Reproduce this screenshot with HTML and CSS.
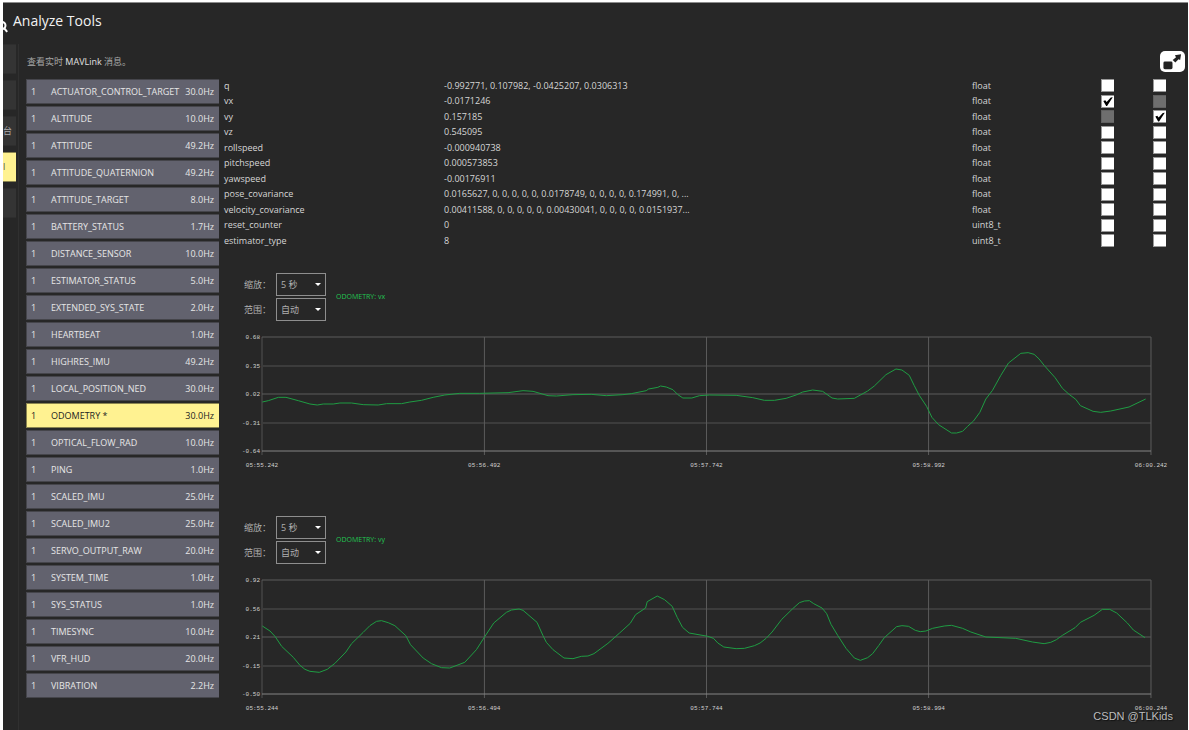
FILE: index.html
```html
<!DOCTYPE html>
<html lang="zh-CN">
<head>
<meta charset="utf-8">
<title>Analyze Tools</title>
<link rel="stylesheet" href="styles.css">
</head>
<body>
<div class="app">
  <header class="header">
    <svg class="search" viewBox="0 0 5 12" aria-hidden="true"><circle cx="-1" cy="4.500" r="3.500"/><path d="M1 7L4.200 10.800"/></svg>
    <h1 class="title">Analyze Tools</h1>
  </header>
  <div class="main">
    <nav class="side">
      <button class="tab"></button>
      <button class="tab"></button>
      <button class="tab">台</button>
      <button class="tab active">l</button>
      <button class="tab"></button>
    </nav>
    <main class="content">
      <div class="toolbar">
        <p class="hint">查看实时 <span class="latin">MAVLink</span> 消息。</p>
        <button class="popout" aria-label="Pop out">
          <svg viewBox="0 0 25 22" aria-hidden="true"><rect x="3" y="11" width="9.500" height="8" rx="1.500"/><path d="M15 4.500L21.500 3.500L20.500 9.500L18.800 8.700L15.500 12L12.700 9.300L16.200 6.600Z"/></svg>
        </button>
      </div>
      <div class="columns">
        <div class="list" id="list"></div>
        <div class="pane">
          <table class="fields">
            <colgroup><col class="c-name"><col><col class="c-type"><col class="c-one"><col class="c-two"></colgroup>
            <tbody id="fields"></tbody>
          </table>
          <section class="chart">
            <div class="controls">
              <div class="selects">
                <label for="zoom1">缩放：</label><span class="pick"><select id="zoom1"><option>5 秒</option></select></span>
                <label for="range1">范围：</label><span class="pick"><select id="range1"><option>自动</option></select></span>
              </div>
              <span class="legend">ODOMETRY: vx</span>
            </div>
            <div class="plot">
              <div class="yaxis"><span>0.68</span><span>0.35</span><span>0.02</span><span>-0.31</span><span>-0.64</span></div>
              <svg class="canvas" viewBox="0 0 2670 342" preserveAspectRatio="none">
                <path class="soft" d="M0 86H2670M0 257H2670M0 0V354"/>
                <path class="grid" d="M0 0H2670M0 171H2670M668 0V354M1335 0V354M2002 0V354M2670 0V354"/>
                <path class="base" d="M0 342H2670"/>
                <polyline class="trace" points="1,195 19,191 49,181 72,181 109,191 144,201 166,204 184,201 214,201 234,198 269,198 304,203 349,204 374,200 419,200 444,195 479,190 514,181 549,174 594,169 654,169 739,167 784,161 814,163 859,176 884,177 934,173 989,172 1034,176 1084,173 1109,170 1154,161 1161,156 1189,151 1197,147 1214,150 1234,158 1249,173 1264,183 1291,183 1314,176 1344,174 1424,175 1474,182 1509,190 1539,190 1574,184 1604,174 1624,165 1654,159 1684,163 1712,183 1729,186 1779,184 1799,173 1819,162 1839,147 1874,113 1904,96 1922,99 1944,115 1959,146 1974,175 1996,208 2012,241 2032,263 2071,288 2086,288 2104,283 2119,268 2137,252 2156,226 2174,186 2194,160 2219,115 2242,78 2279,49 2301,47 2319,52 2334,66 2349,85 2382,122 2404,154 2424,172 2444,187 2458,206 2496,223 2519,226 2549,222 2604,210 2654,186"/>
              </svg>
              <div class="xaxis"><span>05:55.242</span><span>05:56.492</span><span>05:57.742</span><span>05:58.992</span><span>06:00.242</span></div>
            </div>
          </section>
          <section class="chart">
            <div class="controls">
              <div class="selects">
                <label for="zoom2">缩放：</label><span class="pick"><select id="zoom2"><option>5 秒</option></select></span>
                <label for="range2">范围：</label><span class="pick"><select id="range2"><option>自动</option></select></span>
              </div>
              <span class="legend">ODOMETRY: vy</span>
            </div>
            <div class="plot">
              <div class="yaxis"><span>0.92</span><span>0.56</span><span>0.21</span><span>-0.15</span><span>-0.50</span></div>
              <svg class="canvas" viewBox="0 0 2670 342" preserveAspectRatio="none">
                <path class="soft" d="M0 86H2670M0 257H2670M0 0V354"/>
                <path class="grid" d="M0 0H2670M0 171H2670M668 0V354M1335 0V354M2002 0V354M2670 0V354"/>
                <path class="base" d="M0 342H2670"/>
                <polyline class="trace" points="1,138 24,153 39,169 59,199 94,232 114,256 129,268 144,274 172,277 196,268 219,250 252,216 269,191 304,157 324,137 344,124 359,122 379,128 399,137 432,167 446,194 484,234 509,251 539,263 564,264 609,247 644,209 669,170 696,129 734,97 749,90 772,87 784,91 826,127 844,167 854,187 874,209 907,234 934,236 959,229 979,228 997,221 1039,190 1074,159 1106,130 1122,104 1152,84 1157,65 1187,48 1209,59 1232,79 1247,112 1263,142 1283,159 1339,169 1356,175 1369,189 1387,201 1424,206 1449,205 1479,197 1496,189 1514,175 1532,156 1561,118 1594,86 1614,68 1629,63 1644,62 1657,71 1682,84 1696,101 1709,133 1729,166 1754,205 1779,234 1797,241 1819,233 1834,221 1852,197 1869,173 1906,140 1922,137 1942,139 1962,151 1977,155 1994,153 2014,145 2049,138 2071,136 2104,145 2129,156 2174,171 2264,175 2314,186 2349,191 2369,187 2386,179 2404,166 2442,143 2458,127 2499,106 2524,88 2546,88 2567,99 2599,129 2617,150 2652,173"/>
              </svg>
              <div class="xaxis"><span>05:55.244</span><span>05:56.494</span><span>05:57.744</span><span>05:58.994</span><span>06:00.244</span></div>
            </div>
          </section>
        </div>
      </div>
    </main>
  </div>
  <div class="watermark">CSDN @TLKids</div>
</div>
<script src="app.js"></script>
</body>
</html>
```

FILE: styles.css
```css
* { box-sizing: border-box; }
body {
  display: flow-root;
  margin: 0;
  background: #fff;
  color: #d6d6d6;
  font: 9px/12px "Open Sans", "Noto Sans CJK SC", sans-serif;
}
button, select, input { font: inherit; color: inherit; margin: 0; }
button { border: 0; cursor: pointer; }

.app {
  position: relative;
  display: flex;
  flex-direction: column;
  min-height: calc(100vh - 2px);
  margin: 2px 1px 0 3px;
  border-top: 1px solid #8c8c8c;
  background: #272727;
}
.header { display: flex; gap: 5px; height: 41px; }
.search { width: 5px; height: 12px; margin-top: 18px; fill: none; stroke: #fff; stroke-width: 2; }
.title { margin: 0; font-size: 14px; line-height: 36px; font-weight: 400; color: #f2f2f2; }

.main { display: flex; flex: 1; }
.side { display: flex; flex-direction: column; gap: 6px; width: 13px; }
.tab {
  height: 30px;
  padding: 0;
  overflow: hidden;
  border: solid #2e2e2e;
  border-width: 1px 0;
  background: #343434;
  color: #aaa;
  text-align: left;
}
.tab.active { background: #fff291; border-color: #8a8450; color: #555; }
.content { flex: 1; min-width: 0; margin-left: 2px; padding-left: 7px; border-left: 1px solid #303030; }

.toolbar { display: flex; justify-content: space-between; align-items: center; padding: 7px 3px 6px 1px; }
.hint { margin: 0; color: #a8a8a8; }
.latin { color: #e0e0e0; }
.popout { width: 25px; height: 21px; padding: 0; border-radius: 5px; background: #fff; color: #222; }
.popout svg { display: block; width: 25px; height: 21px; fill: currentColor; }

.columns { display: flex; gap: 5px; }
.list { display: flex; flex-direction: column; gap: 2px; width: 193px; padding-top: 1px; }
.msg {
  display: flex;
  align-items: center;
  height: 25px;
  padding: 0 5px 0 4px;
  border: 1px solid #45454b;
  border-right: 0;
  background: #62626e;
  color: #e6e6e6;
  text-align: left;
}
.msg.selected { background: #fff291; border-color: #8a8450; color: #222; }
.id { width: 20px; }
.name { flex: 1; }

.pane { flex: 1; min-width: 0; }
.fields { width: 100%; table-layout: fixed; border-collapse: collapse; }
.fields td { height: 15px; padding: 0; white-space: nowrap; vertical-align: middle; }
.fields tr:nth-child(even) td { height: 16px; }
.c-name { width: 220px; }
.c-type { width: 129px; }
.c-one { width: 52px; }
.c-two { width: 35px; }
.box {
  display: block;
  width: 13px;
  height: 13px;
  appearance: none;
  border: 1px solid #999;
  border-width: 1px 0 1px 1px;
  background: #fff;
}
.box:disabled { background: #6e6e6e; border-color: #606060; }
.box:checked::before {
  content: "";
  display: block;
  width: 11px;
  height: 11px;
  background: #000;
  clip-path: polygon(12% 50%, 30% 44%, 42% 60%, 80% 18%, 98% 16%, 46% 96%, 38% 96%);
}

.chart { padding: 25px 37px 0 18px; }
.chart + .chart { padding-top: 46px; }
.controls { display: flex; align-items: center; gap: 10px; padding-left: 2px; color: #b0b0b0; }
.selects { display: grid; grid-template-columns: 32px 50px; row-gap: 2px; align-items: center; }
.pick { position: relative; }
.pick::after {
  content: "";
  position: absolute;
  right: 5px;
  top: 10px;
  border: solid transparent;
  border-width: 3px 3px 0;
  border-top-color: #fff;
  pointer-events: none;
}
.pick select {
  display: block;
  width: 100%;
  height: 23px;
  padding: 0 4px;
  appearance: none;
  border: 1px solid #8e8e8e;
  border-radius: 0;
  background: #272727;
}
.legend { font-size: 7px; color: #22c552; }

.plot {
  display: grid;
  grid-template-columns: 18px 1fr;
  column-gap: 2px;
  row-gap: 11px;
  padding-top: 16px;
  font: 6px/8px "Liberation Mono", monospace;
  color: #d0d0d0;
}
.yaxis { display: flex; flex-direction: column; justify-content: space-between; margin: -3px 0 -5px; text-align: right; }
.canvas { display: block; width: 100%; height: 114px; overflow: visible; fill: none; }
.canvas * { vector-effect: non-scaling-stroke; }
.soft { stroke: #3c3c3c; stroke-width: 2; shape-rendering: crispEdges; }
.grid { stroke: #5c5c5c; shape-rendering: crispEdges; }
.base { stroke: #858585; shape-rendering: crispEdges; }
.trace { stroke: #1f9c43; }
.xaxis { grid-column: 2; display: flex; justify-content: space-between; margin: 0 -17px; }
.xaxis span { width: 34px; text-align: center; }

.watermark {
  position: absolute;
  right: 15px;
  bottom: 6px;
  font: 11px/16px "Liberation Sans", sans-serif;
  color: #bdbdbd;
  text-shadow: 1px 1px 1px #111;
}
```

FILE: app.js
```js
const messages = [
  ["ACTUATOR_CONTROL_TARGET", "30.0"], ["ALTITUDE", "10.0"], ["ATTITUDE", "49.2"],
  ["ATTITUDE_QUATERNION", "49.2"], ["ATTITUDE_TARGET", "8.0"], ["BATTERY_STATUS", "1.7"],
  ["DISTANCE_SENSOR", "10.0"], ["ESTIMATOR_STATUS", "5.0"], ["EXTENDED_SYS_STATE", "2.0"],
  ["HEARTBEAT", "1.0"], ["HIGHRES_IMU", "49.2"], ["LOCAL_POSITION_NED", "30.0"],
  ["ODOMETRY *", "30.0"], ["OPTICAL_FLOW_RAD", "10.0"], ["PING", "1.0"],
  ["SCALED_IMU", "25.0"], ["SCALED_IMU2", "25.0"], ["SERVO_OUTPUT_RAW", "20.0"],
  ["SYSTEM_TIME", "1.0"], ["SYS_STATUS", "1.0"], ["TIMESYNC", "10.0"],
  ["VFR_HUD", "20.0"], ["VIBRATION", "2.2"]
];
document.getElementById("list").innerHTML = messages.map(([name, hz]) =>
  `<button class="msg${name.endsWith("*") ? " selected" : ""}"><span class="id">1</span><span class="name">${name}</span><span>${hz}Hz</span></button>`
).join("");

const fields = [
  ["q", "-0.992771, 0.107982, -0.0425207, 0.0306313", "float"],
  ["vx", "-0.0171246", "float", "checked", "disabled"],
  ["vy", "0.157185", "float", "disabled", "checked"],
  ["vz", "0.545095", "float"],
  ["rollspeed", "-0.000940738", "float"],
  ["pitchspeed", "0.000573853", "float"],
  ["yawspeed", "-0.00176911", "float"],
  ["pose_covariance", "0.0165627, 0, 0, 0, 0, 0, 0.0178749, 0, 0, 0, 0, 0.174991, 0, ...", "float"],
  ["velocity_covariance", "0.00411588, 0, 0, 0, 0, 0, 0.00430041, 0, 0, 0, 0, 0.0151937...", "float"],
  ["reset_counter", "0", "uint8_t"],
  ["estimator_type", "8", "uint8_t"]
];
document.getElementById("fields").innerHTML = fields.map(([name, value, type, one = "", two = ""]) =>
  `<tr><td>${name}</td><td>${value}</td><td>${type}</td>` +
  `<td><input class="box" type="checkbox" aria-label="${name} 1" ${one}></td>` +
  `<td><input class="box" type="checkbox" aria-label="${name} 2" ${two}></td></tr>`
).join("");
```
